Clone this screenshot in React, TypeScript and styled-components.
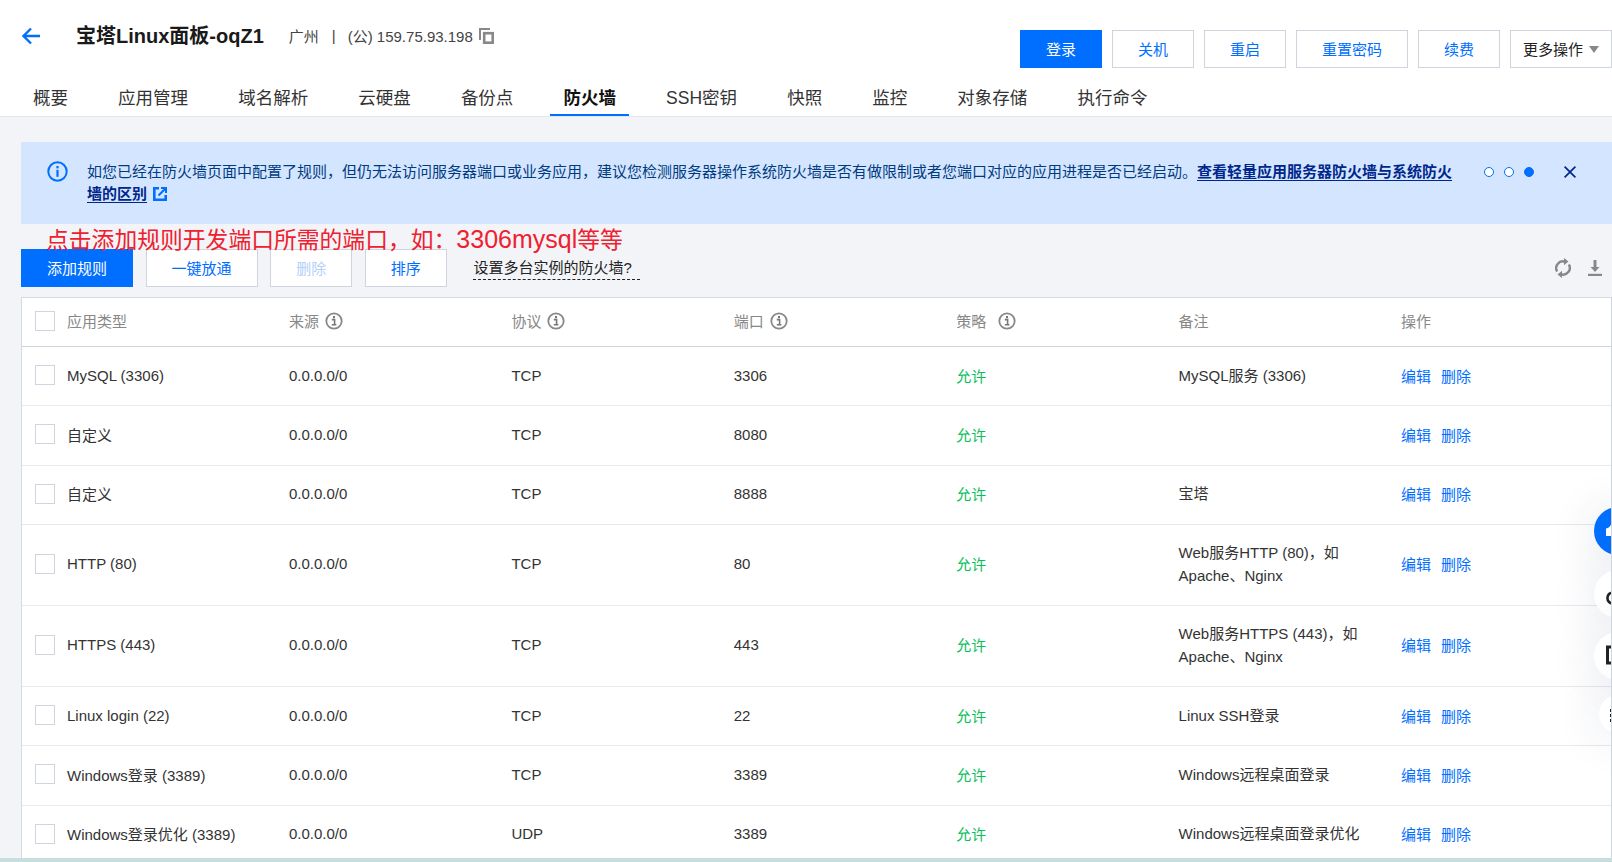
import React from "react";
import styled, { createGlobalStyle } from "styled-components";

const Global = createGlobalStyle`
  html, body { margin: 0; padding: 0; height: 100%; overflow: hidden; }
  * { box-sizing: border-box; }
  body { font-family: "Liberation Sans", "Noto Sans CJK SC", Arial, sans-serif; color: #333; }
`;

const Page = styled.div`
  position: relative;
  width: 1612px;
  height: 862px;
  display: flex;
  flex-direction: column;
  overflow: hidden;
  background: #f2f4f8;
`;

const Head = styled.header`
  flex: none;
  height: 117px;
  background: #fff;
  border-bottom: 1px solid #e3e6eb;
  display: flex;
  flex-direction: column;
`;

const TopRow = styled.div`
  height: 76px;
  display: flex;
  align-items: flex-start;
  padding: 24px 0 0 21px;
`;

const BackLink = styled.a`
  display: flex;
  width: 20px;
  height: 24px;
  align-items: center;
  color: #006eff;
`;

const Title = styled.h1`
  margin: 0 0 0 35px;
  font-size: 20px;
  line-height: 24px;
  font-weight: 700;
  color: #1a1a1a;
`;

const Meta = styled.div`
  margin-left: 25px;
  display: flex;
  align-items: center;
  height: 22px;
  font-size: 15px;
  color: #444;
`;

const Sep = styled.span`
  margin: 0 12px 0 13px;
`;

const CopyIcon = styled.svg`
  margin: 2px 0 0 6px;
  color: #888;
`;

const Actions = styled.div`
  margin: 6px 0 0 auto;
  display: flex;
  gap: 10px;
`;

const HeadButton = styled.button<{ $primary?: boolean; $dark?: boolean; $w: number }>`
  width: ${(p) => p.$w}px;
  height: 38px;
  display: flex;
  align-items: center;
  justify-content: center;
  gap: 6px;
  padding: 0 0 2px;
  font: inherit;
  font-size: 15px;
  background: ${(p) => (p.$primary ? "#006eff" : "#fff")};
  color: ${(p) => (p.$primary ? "#fff" : p.$dark ? "#222" : "#006eff")};
  border: 1px solid ${(p) => (p.$primary ? "#006eff" : "#cfd5de")};
`;

const Caret = styled.i`
  display: block;
  width: 0;
  height: 0;
  margin-top: 2px;
  border-left: 5px solid transparent;
  border-right: 5px solid transparent;
  border-top: 7px solid #888;
`;

const Tabs = styled.nav`
  flex: 1;
  display: flex;
  gap: 24.1px;
  padding-left: 20px;
`;

const Tab = styled.a<{ $active?: boolean }>`
  height: 40px;
  padding: 7px 13px 0;
  font-size: 17.5px;
  line-height: 30px;
  font-weight: ${(p) => (p.$active ? 700 : 400)};
  color: ${(p) => (p.$active ? "#111" : "#333")};
  border-bottom: 2px solid ${(p) => (p.$active ? "#006eff" : "transparent")};
`;

const Content = styled.main`
  position: relative;
  flex: 1;
  min-height: 0;
  overflow: hidden;
  padding: 25px 0 0 21px;
`;

const Banner = styled.section`
  height: 82px;
  background: #d4e6ff;
  display: flex;
  align-items: flex-start;
  padding: 19px 0 0 26px;
  position: relative;
`;

const BannerIcon = styled.svg`
  flex: none;
`;

const BannerText = styled.p`
  margin: 0 0 0 19px;
  width: 1372px;
  flex: none;
  font-size: 15px;
  line-height: 22px;
  color: #003b80;
`;

const BannerLink = styled.a`
  color: #00268c;
  font-weight: 700;
  text-decoration: underline;
  text-underline-offset: 3px;
`;

const ExtIcon = styled.svg`
  margin-left: 6px;
  vertical-align: -2px;
  color: #006eff;
`;

const Dots = styled.div`
  margin-left: 25px;
  margin-top: 6px;
  display: flex;
  gap: 10px;
`;

const Dot = styled.i<{ $on?: boolean }>`
  display: block;
  width: 10px;
  height: 10px;
  border-radius: 50%;
  border: 1.5px solid #006eff;
  background: ${(p) => (p.$on ? "#006eff" : "#fff")};
`;

const CloseIcon = styled.svg`
  margin-left: 30px;
  margin-top: 5px;
  flex: none;
  color: #00268c;
`;

const Annotation = styled.div`
  position: absolute;
  left: 46px;
  top: 107px;
  font-size: 22.8px;
  line-height: 30px;
  color: #f0202e;
  white-space: nowrap;
  z-index: 2;
`;

const AnnotationLatin = styled.span`
  font-size: 25px;
`;

const Toolbar = styled.div`
  margin-top: 25px;
  height: 38px;
  display: flex;
  align-items: center;
  gap: 12.6px;
`;

const ToolButton = styled.button<{ $primary?: boolean; $disabled?: boolean; $w: number }>`
  width: ${(p) => p.$w}px;
  height: 38px;
  padding: 0 0 2px;
  font: inherit;
  font-size: 15px;
  background: ${(p) => (p.$primary ? "#006eff" : "#fff")};
  color: ${(p) => (p.$primary ? "#fff" : p.$disabled ? "#b3cffa" : "#006eff")};
  border: 1px solid ${(p) => (p.$primary ? "#006eff" : "#cfd5de")};
`;

const HelpLink = styled.a`
  margin: 9px 0 0 14px;
  font-size: 15px;
  line-height: 20px;
  color: #222;
  border-bottom: 1px dashed #222;
  align-self: flex-start;
  padding: 0 8px 1px 0;
`;

const ToolIcons = styled.div`
  margin-left: auto;
  display: flex;
  align-items: center;
  gap: 17px;
  padding-right: 10px;
  color: #888;
`;

const Table = styled.div`
  position: relative;
  margin-top: 10px;
  background: #fff;
  border: 1px solid #d5d9e0;
  border-bottom: none;
  &::after {
    content: "";
    position: absolute;
    top: -1px;
    bottom: 0;
    right: -1px;
    width: 1px;
    background: #cfd5de;
    z-index: 4;
  }
`;

const Row = styled.div<{ $h: number; $head?: boolean }>`
  height: ${(p) => p.$h}px;
  display: grid;
  grid-template-columns: 267px repeat(5, 222.4px) 1fr;
  align-items: center;
  padding-bottom: ${(p) => (p.$head ? 3 : 2)}px;
  font-size: 15px;
  color: ${(p) => (p.$head ? "#888" : "#333")};
  border-bottom: 1px solid ${(p) => (p.$head ? "#cfd5de" : "#e7e9ee")};
`;

const NameCell = styled.div`
  display: flex;
  align-items: center;
  padding-left: 13px;
  gap: 12px;
`;

const Check = styled.span`
  width: 20px;
  height: 20px;
  flex: none;
  background: #fff;
  border: 1px solid #cfd5de;
`;

const HeadCell = styled.div<{ $gap?: number }>`
  display: flex;
  align-items: center;
  gap: ${(p) => p.$gap ?? 6}px;
`;

const Allow = styled.span`
  color: #0abf5b;
`;

const Remark = styled.div`
  width: 190px;
  line-height: 23px;
`;

const Ops = styled.div`
  display: flex;
  gap: 10px;
  color: #006eff;
`;

const Floats = styled.div`
  position: absolute;
  left: 1594px;
  top: 507px;
  display: flex;
  flex-direction: column;
  align-items: flex-start;
  gap: 14.5px;
  z-index: 3;
`;

const Fab = styled.div<{ $blue?: boolean; $small?: boolean }>`
  width: ${(p) => (p.$small ? 38 : 48)}px;
  height: ${(p) => (p.$small ? 38 : 48)}px;
  margin-left: ${(p) => (p.$small ? 5 : 0)}px;
  border-radius: 50%;
  display: flex;
  align-items: center;
  justify-content: center;
  background: ${(p) => (p.$blue ? "#006eff" : "#fff")};
  color: ${(p) => (p.$blue ? "#fff" : "#222")};
  box-shadow: 0 4px 48px rgba(30, 50, 100, 0.14);
`;

const BottomStrip = styled.div`
  flex: none;
  height: 4px;
  background: #c6dede;
`;

const InfoIcon = () => (
  <svg width="18" height="18" viewBox="0 0 18 18" fill="none">
    <circle cx="9" cy="9" r="7.7" stroke="#888" strokeWidth="1.8" />
    <rect x="8" y="4" width="2" height="2.2" fill="#777" />
    <path d="M6.800 7.600h2.800v4.900M6.800 12.800h4.600" stroke="#777" strokeWidth="1.600" />
  </svg>
);

type Rule = { name: string; proto: string; port: string; note: React.ReactNode; tall?: boolean };

const rules: Rule[] = [
  { name: "MySQL (3306)", proto: "TCP", port: "3306", note: "MySQL服务 (3306)" },
  { name: "自定义", proto: "TCP", port: "8080", note: "" },
  { name: "自定义", proto: "TCP", port: "8888", note: "宝塔" },
  { name: "HTTP (80)", proto: "TCP", port: "80", note: "Web服务HTTP (80)，如 Apache、Nginx", tall: true },
  { name: "HTTPS (443)", proto: "TCP", port: "443", note: "Web服务HTTPS (443)，如 Apache、Nginx", tall: true },
  { name: "Linux login (22)", proto: "TCP", port: "22", note: "Linux SSH登录" },
  { name: "Windows登录 (3389)", proto: "TCP", port: "3389", note: "Windows远程桌面登录" },
  { name: "Windows登录优化 (3389)", proto: "UDP", port: "3389", note: "Windows远程桌面登录优化" },
];

const tabs = ["概要", "应用管理", "域名解析", "云硬盘", "备份点", "防火墙", "SSH密钥", "快照", "监控", "对象存储", "执行命令"];

export default function App() {
  return (
    <Page>
      <Global />
      <Head>
        <TopRow>
          <BackLink>
            <svg width="20" height="18" viewBox="0 0 20 18" fill="none">
              <path d="M19 9H2.500M10 1.500L2.500 9l7.500 7.500" stroke="currentColor" strokeWidth="2.400" />
            </svg>
          </BackLink>
          <Title>宝塔Linux面板-oqZ1</Title>
          <Meta>
            广州<Sep>|</Sep>(公) 159.75.93.198
            <CopyIcon width="15" height="16" viewBox="0 0 15 16" fill="none">
              <path d="M1 12V1h10" stroke="currentColor" strokeWidth="2" />
              <rect x="5.200" y="5.200" width="8.500" height="9.500" stroke="currentColor" strokeWidth="2.600" />
            </CopyIcon>
          </Meta>
          <Actions>
            <HeadButton $primary $w={82}>登录</HeadButton>
            <HeadButton $w={82}>关机</HeadButton>
            <HeadButton $w={82}>重启</HeadButton>
            <HeadButton $w={112}>重置密码</HeadButton>
            <HeadButton $w={82}>续费</HeadButton>
            <HeadButton $dark $w={102}>更多操作<Caret /></HeadButton>
          </Actions>
        </TopRow>
        <Tabs>
          {tabs.map((t) => (
            <Tab key={t} $active={t === "防火墙"}>{t}</Tab>
          ))}
        </Tabs>
      </Head>
      <Content>
        <Banner>
          <BannerIcon width="21" height="21" viewBox="0 0 21 21" fill="none">
            <circle cx="10.500" cy="10.500" r="9.200" stroke="#006eff" strokeWidth="2" />
            <rect x="9.400" y="5" width="2.200" height="2.400" fill="#006eff" />
            <rect x="9.400" y="8.800" width="2.200" height="7" fill="#006eff" />
          </BannerIcon>
          <BannerText>
            如您已经在防火墙页面中配置了规则，但仍无法访问服务器端口或业务应用，建议您检测服务器操作系统防火墙是否有做限制或者您端口对应的应用进程是否已经启动。
            <BannerLink>查看轻量应用服务器防火墙与系统防火墙的区别</BannerLink>
            <ExtIcon width="14" height="14" viewBox="0 0 14 14" fill="none">
              <path d="M6 1.300H1.300v11.400h11.400V8" stroke="currentColor" strokeWidth="2.600" />
              <path d="M5.500 8.500L12 2M8 1h5v5" stroke="currentColor" strokeWidth="2" />
            </ExtIcon>
          </BannerText>
          <Dots>
            <Dot />
            <Dot />
            <Dot $on />
          </Dots>
          <CloseIcon width="12" height="12" viewBox="0 0 12 12" fill="none">
            <path d="M.6.6l10.800 10.800M11.400.6L.6 11.400" stroke="currentColor" strokeWidth="1.700" />
          </CloseIcon>
        </Banner>
        <Annotation>
          点击添加规则开发端口所需的端口，如：<AnnotationLatin>3306mysql</AnnotationLatin>等等
        </Annotation>
        <Toolbar>
          <ToolButton $primary $w={112}>添加规则</ToolButton>
          <ToolButton $w={112}>一键放通</ToolButton>
          <ToolButton $disabled $w={82}>删除</ToolButton>
          <ToolButton $w={82}>排序</ToolButton>
          <HelpLink>设置多台实例的防火墙?</HelpLink>
          <ToolIcons>
            <svg width="16" height="20" viewBox="0 0 16 20" fill="none">
              <path d="M2.200 13.500A6.600 6.600 0 0 1 10 3.800M13.800 6.500A6.600 6.600 0 0 1 6 16.200" stroke="currentColor" strokeWidth="2.400" />
              <path d="M9 0l4.500 3.600L9 7.200zM7 12.800l-4.500 3.600L7 20z" fill="currentColor" />
            </svg>
            <svg width="14" height="16" viewBox="0 0 14 16" fill="none">
              <path d="M7 0v9" stroke="currentColor" strokeWidth="3" />
              <path d="M2.500 7h9L7 12z" fill="currentColor" />
              <rect x="0" y="13.800" width="14" height="2.200" fill="currentColor" />
            </svg>
          </ToolIcons>
        </Toolbar>
        <Table>
          <Row $head $h={49}>
            <NameCell><Check />应用类型</NameCell>
            <HeadCell>来源<InfoIcon /></HeadCell>
            <HeadCell>协议<InfoIcon /></HeadCell>
            <HeadCell>端口<InfoIcon /></HeadCell>
            <HeadCell $gap={12}>策略<InfoIcon /></HeadCell>
            <HeadCell>备注</HeadCell>
            <HeadCell>操作</HeadCell>
          </Row>
          {rules.map((r, i) => (
            <Row key={i} $h={r.tall ? 81 : 59.33}>
              <NameCell><Check />{r.name}</NameCell>
              <div>0.0.0.0/0</div>
              <div>{r.proto}</div>
              <div>{r.port}</div>
              <Allow>允许</Allow>
              <Remark>{r.note}</Remark>
              <Ops><span>编辑</span><span>删除</span></Ops>
            </Row>
          ))}
        </Table>
      </Content>
      <BottomStrip />
      <Floats>
        <Fab $blue>
          <svg width="24" height="24" viewBox="0 0 24 24" fill="currentColor">
            <path d="M0 17V9.500C3 9.500 5.500 6 6.500 1.500H14V17z" />
          </svg>
        </Fab>
        <Fab>
          <svg width="24" height="24" viewBox="0 0 24 24" fill="none" stroke="currentColor" strokeWidth="2.600">
            <circle cx="7" cy="16" r="5.600" />
            <path d="M10 11l4-4" />
          </svg>
        </Fab>
        <Fab>
          <svg width="24" height="24" viewBox="0 0 24 24" fill="none" stroke="currentColor" strokeWidth="3">
            <rect x="1.500" y="3" width="20" height="16" />
          </svg>
        </Fab>
        <Fab $small>
          <svg width="20" height="20" viewBox="0 0 20 20" fill="currentColor">
            <rect x="2" y="5" width="3" height="3" />
            <rect x="2" y="10" width="3" height="3" />
            <rect x="2" y="15" width="3" height="3" />
          </svg>
        </Fab>
      </Floats>
    </Page>
  );
}
